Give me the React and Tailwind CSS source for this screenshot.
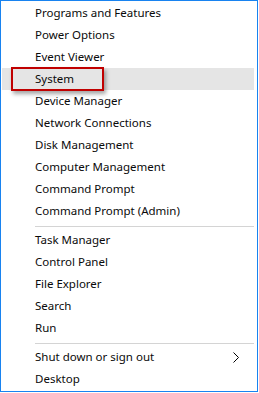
import React from 'react'

const groups = [
  ['Programs and Features', 'Power Options', 'Event Viewer', 'System', 'Device Manager', 'Network Connections', 'Disk Management', 'Computer Management', 'Command Prompt', 'Command Prompt (Admin)'],
  ['Task Manager', 'Control Panel', 'File Explorer', 'Search', 'Run'],
  ['Shut down or sign out', 'Desktop'],
]

function Item({ label }){
  const active = label === 'System'
  return (
    <div className={'relative flex items-center h-[22px] pl-[33px] pr-2 ' + (active ? 'bg-[#e5e5e5]' : '')}>
      <span>{label}</span>
      {active && (
        <div className="absolute left-[9px] top-[-1px] w-[93px] h-[24px] border-2 border-[#c00000] shadow-[2px_3px_4px_rgba(0,0,0,0.35)]" />
      )}
      {label === 'Shut down or sign out' && (
        <svg className="ml-auto mr-[6px]" width="8" height="11" viewBox="0 0 8 11">
          <path d="M1.5 0.5 L6.5 5.5 L1.5 10.5" fill="none" stroke="#000" strokeWidth="1" />
        </svg>
      )}
    </div>
  )
}

export default function App(){
  return (
    <div className="w-[259px] h-[393px] bg-white">
      <div className="w-[258px] h-[392px] border border-[#1883f0] bg-white px-px pr-[3px] py-px text-[11.5px] text-[#0a0a0a] font-['Segoe_UI','Noto_Sans',sans-serif]">
        {groups.map((g, gi) => (
          <div key={gi}>
            {gi > 0 && (
              <div className="h-[7px] pt-[4px] pl-[33px]">
                <div className="h-px bg-[#d4d4d4]" />
              </div>
            )}
            {g.map(label => <Item key={label} label={label} />)}
          </div>
        ))}
      </div>
    </div>
  )
}
